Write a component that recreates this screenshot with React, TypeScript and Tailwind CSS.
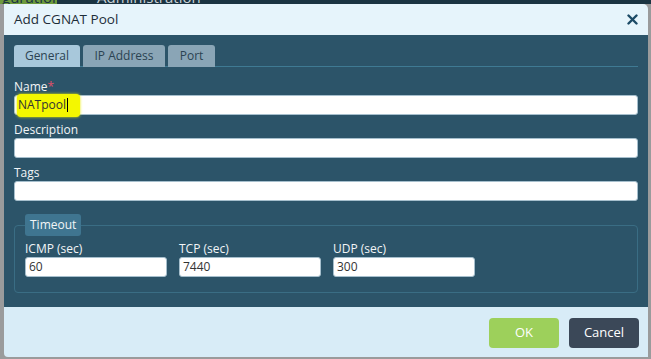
import React from "react";

const font = { fontFamily: '"Open Sans", "Noto Sans", sans-serif' };

const Field = ({ label, value, required, highlight }: { label: string; value?: string; required?: boolean; highlight?: boolean }) => {
  return (
    <div className="flex flex-col">
      <div className="text-[12px] leading-[16px] text-[#f2f5f7]">
        {label}
        {required && <span className="text-[#e0506a]">*</span>}
      </div>
      <div className="h-[20px] bg-white border border-[#a6bfcd] rounded-[3px] flex items-center pl-[2px] text-[12px] text-[#333]">
        {highlight ? (
          <span className="flex items-center h-[23px] bg-[#f4f700] rounded-[4px] pl-[1px] pr-[12px] shadow-[0_0_3px_#e8ec00]">
            {value}
            <span className="ml-[1px] w-[1px] h-[14px] bg-black" />
          </span>
        ) : (
          value
        )}
      </div>
    </div>
  );
};

const SmallField = ({ label, value }: { label: string; value: string }) => (
  <div className="flex flex-col w-[142px]">
    <div className="text-[12px] leading-[16px] text-[#f2f5f7]">{label}</div>
    <div className="h-[20px] bg-white border border-[#a6bfcd] rounded-[3px] flex items-center pl-[3px] text-[12px] text-[#333]">
      {value}
    </div>
  </div>
);

const App = () => {
  const tabs = [
    { name: "General", w: "w-[66px]", active: true },
    { name: "IP Address", w: "w-[82px]", active: false },
    { name: "Port", w: "w-[47px]", active: false },
  ];

  return (
    <div className="w-[651px] h-[359px] bg-[#9a9b9c] overflow-hidden flex flex-col" style={font}>
      {/* page behind the modal */}
      <div className="h-[4px] shrink-0 bg-[#1b3442] flex overflow-hidden text-[15px] leading-[14px]">
        <div className="w-[57px] bg-[#6d9a3c] text-[#1b3442] -mt-[10px] pl-[2px]">guration</div>
        <div className="ml-[40px] text-[#c9d1d6] -mt-[10px]">Administration</div>
      </div>

      <div className="flex flex-1">
        <div className="w-[4px] shrink-0" />
        <div className="w-[644px] h-[353px] flex flex-col rounded-tr-[5px] rounded-bl-[4px] overflow-hidden">
          {/* header */}
          <div className="h-[31px] shrink-0 bg-[#e6f4fb] flex items-center justify-between pl-[10px] pr-[10px]">
            <span className="text-[13.5px] text-[#1d2d38]">Add CGNAT Pool</span>
            <svg width="11" height="11" viewBox="0 0 11 11">
              <path d="M1.5 1.5 L9.5 9.5 M9.5 1.5 L1.5 9.5" stroke="#1c4a66" strokeWidth="2.4" strokeLinecap="round" />
            </svg>
          </div>

          {/* body */}
          <div className="h-[272px] shrink-0 bg-[#2c5469] px-[10px] pt-[10px] flex flex-col">
            <div className="flex gap-[3px] h-[22px] border-b border-[#3f7a93]">
              {tabs.map((t) => (
                <div
                  key={t.name}
                  className={`${t.w} h-[22px] rounded-t-[3px] flex items-center justify-center text-[12px] text-[#2b4352] ${
                    t.active ? "bg-[#a8c8db]" : "bg-[#8aa5b6]"
                  }`}
                >
                  {t.name}
                </div>
              ))}
            </div>

            <div className="mt-[12px] flex flex-col gap-[7px]">
              <Field label="Name" value="NATpool" required highlight />
              <Field label="Description" />
              <Field label="Tags" />
            </div>

            <fieldset className="mt-[13px] border border-[#3a6d84] rounded-[4px] px-[10px] pb-[15px]">
              <legend className="h-[22px] px-[5px] bg-[#3f7590] rounded-[3px] text-[12px] leading-[22px] text-[#f2f5f7]">
                Timeout
              </legend>
              <div className="mt-[5px] flex gap-[12px]">
                <SmallField label="ICMP (sec)" value="60" />
                <SmallField label="TCP (sec)" value="7440" />
                <SmallField label="UDP (sec)" value="300" />
              </div>
            </fieldset>
          </div>

          {/* footer */}
          <div className="flex-1 bg-[#d8ecf7] flex items-start justify-end pt-[11px] pr-[9px] gap-[10px]">
            <button className="w-[70px] h-[30px] rounded-[4px] bg-[#9dd05b] text-white text-[13px]">OK</button>
            <button className="w-[70px] h-[30px] rounded-[4px] bg-[#3b4858] text-white text-[13px]">Cancel</button>
          </div>
        </div>
      </div>
      <div className="h-[2px] shrink-0" />
    </div>
  );
};

export default App;
